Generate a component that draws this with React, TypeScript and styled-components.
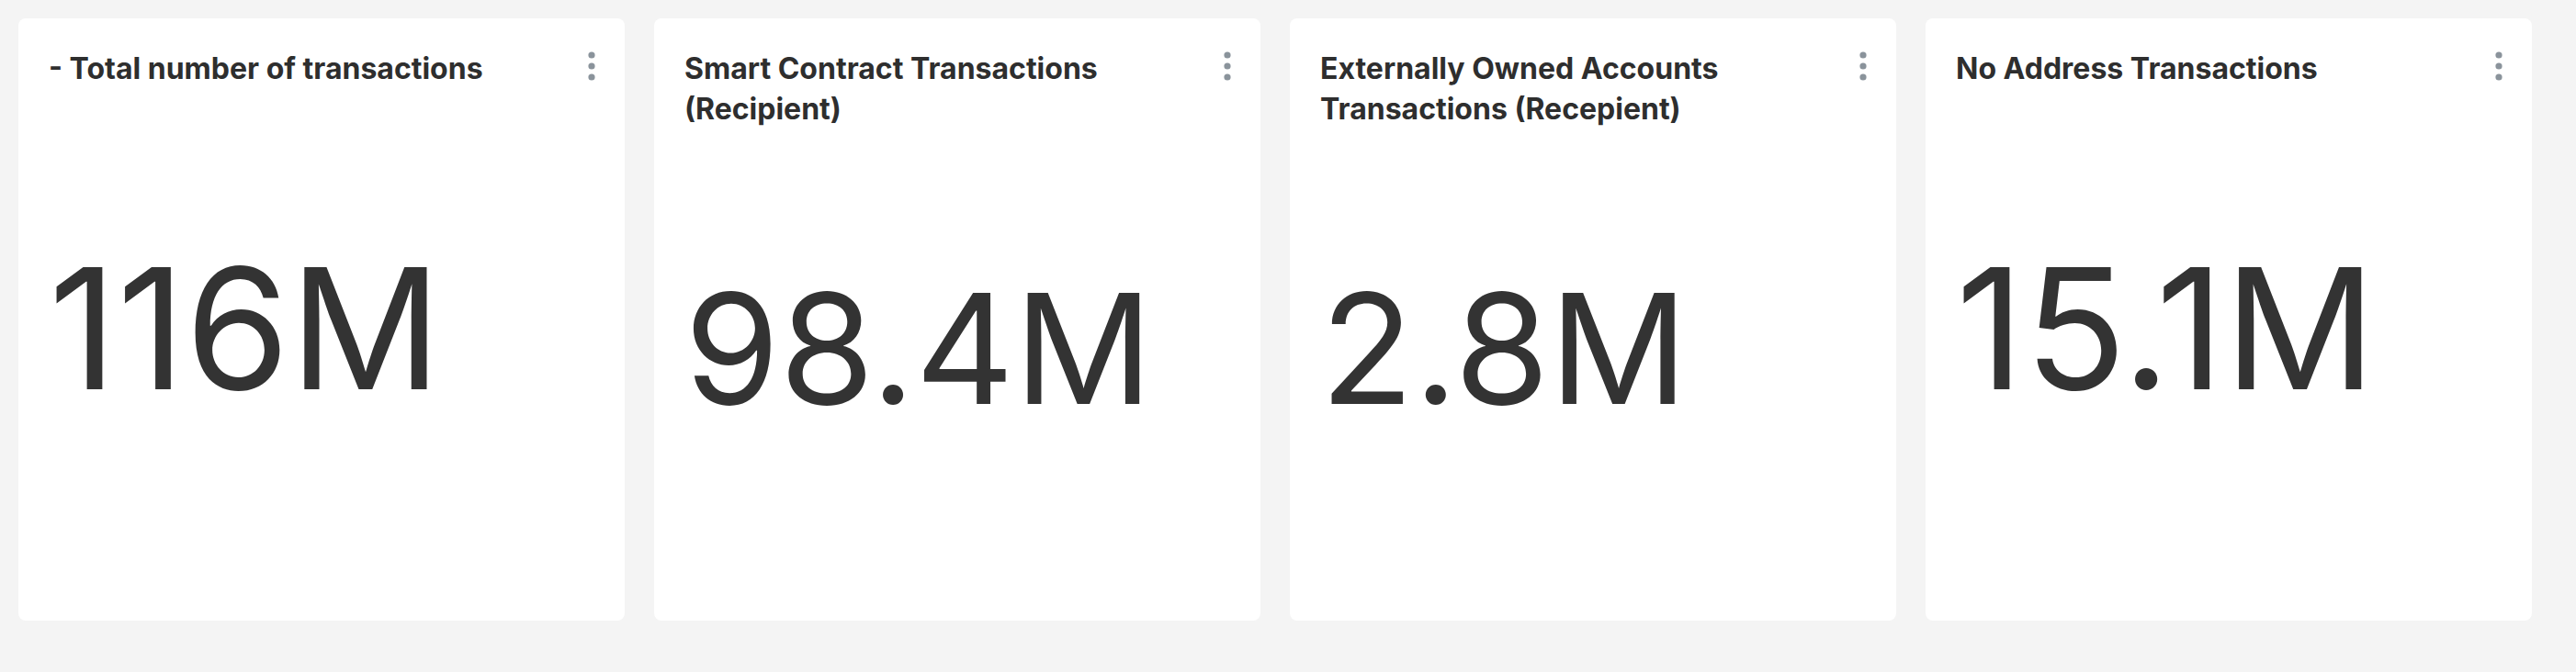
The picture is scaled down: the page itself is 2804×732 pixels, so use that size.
import styled, { createGlobalStyle } from 'styled-components';

const GlobalStyle = createGlobalStyle`
  html, body {
    margin: 0;
    padding: 0;
    background: #f4f4f4;
  }
  body {
    font-family: Inter, "Noto Sans", sans-serif;
  }
`;

const Board = styled.div`
  display: grid;
  grid-template-columns: repeat(4, 660px);
  gap: 32px;
  padding: 20px 48px 56px 20px;
`;

const Card = styled.section`
  display: flex;
  flex-direction: column;
  height: 656px;
  box-sizing: border-box;
  padding: 33px 32px 58px 33px;
  background: #ffffff;
  border-radius: 8px;
`;

const CardHeader = styled.header`
  display: flex;
  align-items: flex-start;
  justify-content: space-between;
  gap: 40px;
`;

const Title = styled.h2`
  margin: 0;
  flex: 1;
  max-width: 540px;
  font-size: 32px;
  line-height: 44px;
  font-weight: 700;
  color: #2e2e2e;
`;

const MenuButton = styled.button`
  display: flex;
  flex-shrink: 0;
  padding: 0;
  margin-top: 3px;
  border: none;
  background: transparent;
  cursor: pointer;
`;

const ValueArea = styled.div`
  flex: 1;
  display: flex;
  align-items: center;
`;

const Value = styled.span<{ size: number }>`
  font-size: ${p => p.size}px;
  line-height: 1.21;
  font-weight: 400;
  color: #333333;
  white-space: nowrap;
`;

const KebabIcon = () => (
  <svg width="8" height="32" viewBox="0 0 8 32">
    <circle cx="4" cy="4" r="3.6" fill="#8a939b" />
    <circle cx="4" cy="16" r="3.6" fill="#8a939b" />
    <circle cx="4" cy="28" r="3.6" fill="#8a939b" />
  </svg>
);

const cards = [
  { title: '- Total number of transactions', value: '116M', size: 183 },
  { title: 'Smart Contract Transactions (Recipient)', value: '98.4M', size: 167 },
  { title: 'Externally Owned Accounts Transactions (Recepient)', value: '2.8M', size: 167 },
  { title: 'No Address Transactions', value: '15.1M', size: 183 },
];

const App = () => (
  <>
    <GlobalStyle />
    <Board>
      {cards.map(card => (
        <Card key={card.title}>
          <CardHeader>
            <Title>{card.title}</Title>
            <MenuButton aria-label="More">
              <KebabIcon />
            </MenuButton>
          </CardHeader>
          <ValueArea>
            <Value size={card.size}>{card.value}</Value>
          </ValueArea>
        </Card>
      ))}
    </Board>
  </>
);

export default App;
